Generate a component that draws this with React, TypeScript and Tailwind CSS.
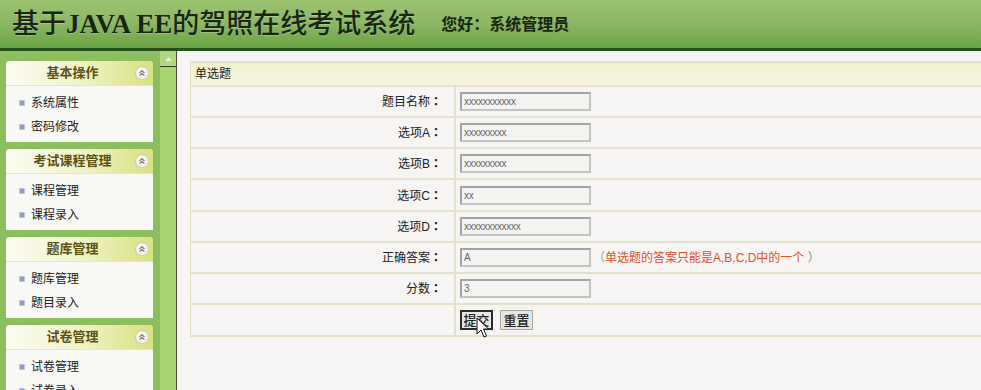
import React from "react";

const sans = { fontFamily: '"Liberation Sans", "Noto Sans CJK SC", sans-serif' };

function Collapse() {
  return (
    <span className="absolute right-[4px] top-[5px] w-[14px] h-[14px] rounded-full bg-[#f4f4ee] border border-[#c8c8b8] flex items-center justify-center">
      <svg width="8" height="8" viewBox="0 0 8 8">
        <path d="M1.5 4 L4 1.8 L6.5 4 M1.5 6.6 L4 4.4 L6.5 6.6" fill="none" stroke="#7a7a70" strokeWidth="1.1" />
      </svg>
    </span>
  );
}

function Panel({ title, items }: { title: string; items: string[] }) {
  return (
    <div className="shrink-0 rounded-t-[4px] overflow-hidden bg-[#f8f8f5]">
      <div className="relative h-[25px] bg-gradient-to-r from-[#fcfcf2] via-[#f0f2c8] to-[#d9e27e] border-b border-[#e4e4c8] flex items-center justify-center pr-[14px]">
        <span className="text-[13px] font-bold text-[#5e5214]">{title}</span>
        <Collapse />
      </div>
      <div className="h-[56px] pt-[5px] flex flex-col">
        {items.map((it) => (
          <div key={it} className="h-[24px] flex items-center pl-[13px]">
            <span className="w-[6px] h-[6px] bg-[#8fa0c4] border border-[#b9c2d6] rounded-[1px] mr-[6px]" />
            <span className="text-[12px] text-[#222]">{it}</span>
          </div>
        ))}
      </div>
    </div>
  );
}

const rows: { label: string; value?: string; h: number; hint?: boolean; buttons?: boolean }[] = [
  { label: "题目名称", value: "xxxxxxxxxxx", h: 31 },
  { label: "选项A", value: "xxxxxxxxx", h: 31 },
  { label: "选项B", value: "xxxxxxxxx", h: 31 },
  { label: "选项C", value: "xx", h: 32 },
  { label: "选项D", value: "xxxxxxxxxxxx", h: 31 },
  { label: "正确答案", value: "A", h: 31, hint: true },
  { label: "分数", value: "3", h: 31 },
  { label: "", h: 32, buttons: true },
];

export default function App() {
  return (
    <div className="w-[981px] h-[390px] overflow-hidden flex flex-col bg-[#f6f5f3]" style={sans}>
      <header className="h-[51px] shrink-0 border-b-[3px] border-[#24501a] bg-gradient-to-b from-[#9cc470] via-[#8bb663] to-[#6aa443] flex items-center">
        <h1
          className="ml-[12px] text-[27px] font-medium text-[#162610] leading-none [text-shadow:0_1px_1px_rgba(255,255,255,0.25)]"
          style={{ fontFamily: '"Liberation Serif", "Noto Sans CJK SC", serif' }}
        >
          基于<span className="font-bold">JAVA EE</span>的驾照在线考试系统
        </h1>
        <span className="ml-[26px] mt-[2px] text-[16px] font-bold text-[#162610]">您好：系统管理员</span>
      </header>
      <div className="flex flex-1 min-h-0">
        <aside className="w-[160px] shrink-0 bg-[#8cbd5e] pl-[6px] pr-[7px] pt-[10px] flex flex-col gap-[7px]">
          <Panel title="基本操作" items={["系统属性", "密码修改"]} />
          <Panel title="考试课程管理" items={["课程管理", "课程录入"]} />
          <Panel title="题库管理" items={["题库管理", "题目录入"]} />
          <Panel title="试卷管理" items={["试卷管理", "试卷录入"]} />
        </aside>
        <div className="w-[17px] shrink-0 bg-[#a9d36f] border-r border-[#4a4a42] flex flex-col">
          <div className="h-[16px] bg-[#b2d881] border-b border-[#2f3a28] flex items-center justify-center">
            <svg width="7" height="4" viewBox="0 0 7 4">
              <path d="M0 4 L3.5 0 L7 4 Z" fill="#eef6e4" />
            </svg>
          </div>
        </div>
        <main className="flex-1 min-w-0 pl-[13px] pt-[10px]">
          <div className="border-l border-[#e0dfca]">
            <div className="h-[26px] bg-gradient-to-b from-[#eef3cc] to-[#f7f3de] border-t-2 border-b-2 border-[#e2e1cc] flex items-center pl-[4px]">
              <span className="text-[12px] text-[#222]">单选题</span>
            </div>
            {rows.map((r, i) => (
              <div key={i} className="flex border-b-2 border-[#e2e1cc]" style={{ height: r.h }}>
                <div className="w-[265px] shrink-0 border-r-2 border-[#e2e1cc] flex items-center justify-end pr-[12px]">
                  {r.label && (
                    <span className="text-[12px] text-[#222]">
                      {r.label}
                      <span className="font-bold" style={{ fontFamily: '"Noto Sans CJK TC", sans-serif' }}>：</span>
                    </span>
                  )}
                </div>
                <div className="relative flex-1 flex items-center pl-[4px]">
                  {r.buttons ? (
                    <>
                      <button className="w-[33px] h-[20px] border-2 border-[#2c2c2c] bg-[#e9e9e2] text-[13px] font-medium text-[#222] leading-none flex items-center justify-center">
                        提交
                      </button>
                      <button className="ml-[7px] w-[33px] h-[20px] border border-[#a8a8a0] bg-[#e7e7df] text-[13px] font-medium text-[#222] leading-none flex items-center justify-center">
                        重置
                      </button>
                      <svg className="absolute left-[20px] top-[12px]" width="13" height="21" viewBox="0 0 13 21">
                        <path d="M1 1 L1 17 L5 13 L8 20 L10.5 19 L7.5 12 L12.5 12 Z" fill="#fff" stroke="#111" strokeWidth="1" strokeLinejoin="round" />
                      </svg>
                    </>
                  ) : (
                    <>
                      <div className="w-[131px] h-[19px] border-2 border-[#c4c4c0] border-t-[#a4a4a0] border-l-[#a4a4a0] bg-[#f4f4f2] flex items-center pl-[2px]">
                        <span className="text-[10px] text-[#666] tracking-[-0.3px]">{r.value}</span>
                      </div>
                      {r.hint && (
                        <span className="ml-[2px] text-[12px] text-[#e0512c]">
                          <span className="text-[#9aa2b8]">（</span>
                          单选题的答案只能是A,B,C,D中的一个
                          <span className="text-[#8c8c8c]"> ）</span>
                        </span>
                      )}
                    </>
                  )}
                </div>
              </div>
            ))}
          </div>
        </main>
      </div>
    </div>
  );
}
